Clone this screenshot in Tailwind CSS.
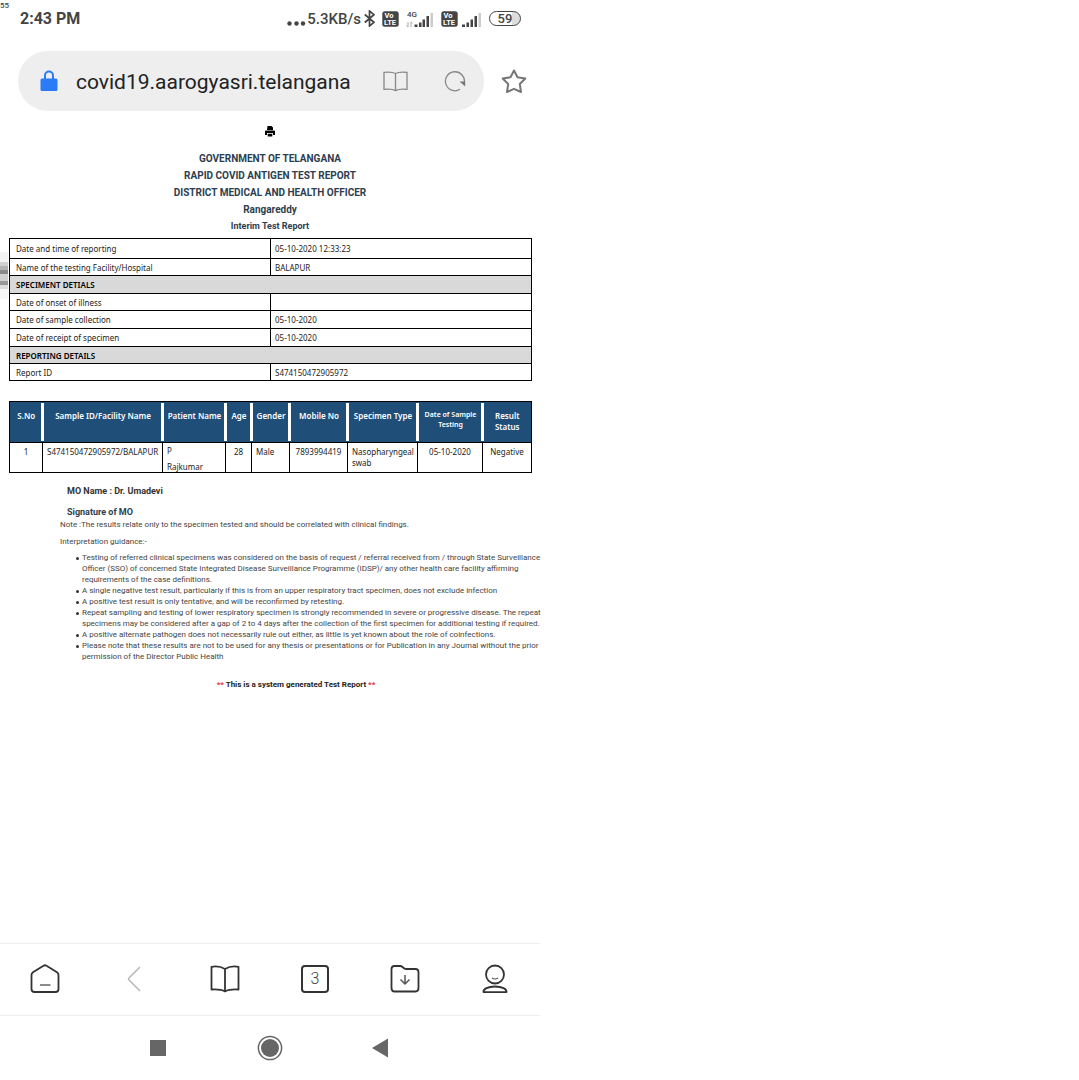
<!DOCTYPE html>
<html lang="en">
<head>
<meta charset="utf-8">
<meta name="viewport" content="width=device-width, initial-scale=1">
<title>Rapid Covid Antigen Test Report</title>
<script src="https://cdn.jsdelivr.net/npm/@tailwindcss/browser@4"></script>
</head>
<body class="bg-white font-['Roboto',sans-serif] text-[#333]">
<div class="relative flex min-h-screen w-1/2 min-w-[540px] flex-col">
  <span class="absolute left-0 top-px text-[8px] leading-[10px] font-medium text-[#444]">55</span>
  <!-- scroll handle on the left edge -->
  <div class="absolute left-0 top-[252px] flex w-2 flex-col" aria-hidden="true">
    <div class="h-[10px] bg-[#f4f4f4]"></div>
    <div class="h-1 bg-[#d0d0d0]"></div>
    <div class="h-1 bg-[#b4b4b4]"></div>
    <div class="h-1 bg-[#8a8a8a]"></div>
    <div class="h-[7px] bg-[#d0d0d0]"></div>
    <div class="h-1 bg-[#999]"></div>
    <div class="h-1 bg-[#dcdcdc]"></div>
    <div class="h-[10px] bg-[#f6f6f6]"></div>
  </div>

  <!-- status bar -->
  <div class="flex h-[37px] items-center justify-between pl-5 pr-[19px] text-[#444]">
    <span class="text-[16px] leading-5 font-bold">2:43 PM</span>
    <div class="flex items-center">
      <svg class="mr-px mt-[9px] h-[5px] w-[19px]" viewBox="0 0 19 5" fill="#444"><circle cx="2.5" cy="2.5" r="2.200"/><circle cx="9.500" cy="2.5" r="2.200"/><circle cx="16" cy="2.5" r="2.200"/></svg>
      <span class="text-[15px] leading-5 font-medium">5.3KB/s</span>
      <svg class="ml-[3px] h-[17px] w-[11px]" viewBox="0 0 11 17" fill="none" stroke="#444" stroke-width="1.700"><path d="M.8 4.500 10 12.300 5.500 16V1L10 4.700.8 12.500"/></svg>
      <svg class="ml-[7px] h-4 w-[17px]" viewBox="0 0 17 16"><rect x=".3" y=".3" width="16.400" height="15.400" rx="2.500" fill="#444"/><text x="2.500" y="7.300" font-size="7.500" font-weight="700" fill="#fff">Vo</text><text x="2" y="14.300" font-size="7.500" font-weight="700" fill="#fff">LTE</text></svg>
      <svg class="ml-[7px] h-[18px] w-[28px]" viewBox="0 0 28 18"><text x="1" y="7" font-size="8" font-weight="500" fill="#444">4G</text><path d="M2 12v5M.5 15.500 2 17M5 17v-5l1.200 1.500" stroke="#aaa" fill="none"/><path d="M8.500 14.500h3V17h-3zM13 12.500h2.500V17H13zM16.500 9.500H19V17h-2.500zM20.500 6H23v11h-2.500z" fill="#444"/><path d="M24.500 3H27v14h-2.500z" fill="#ccc"/></svg>
      <svg class="ml-[7px] h-4 w-[17px]" viewBox="0 0 17 16"><rect x=".3" y=".3" width="16.400" height="15.400" rx="2.500" fill="#444"/><text x="2.500" y="7.300" font-size="7.500" font-weight="700" fill="#fff">Vo</text><text x="2" y="14.300" font-size="7.500" font-weight="700" fill="#fff">LTE</text></svg>
      <svg class="ml-[3px] h-[18px] w-5" viewBox="0 0 20 18"><path d="M1 14.500h3V17H1zM5.500 12.500H8V17H5.500zM9.500 9.500H12V17H9.500zM13.500 6H16v11h-2.500z" fill="#444"/><path d="M17.500 3H20v14h-2.500z" fill="#ccc"/></svg>
      <span class="ml-2 flex h-[15px] w-8 items-center justify-center rounded-full border border-[#444] bg-linear-to-r from-white from-75% to-[#ddd] to-75% text-[13px] leading-[13px] font-medium">59</span>
    </div>
  </div>

  <!-- address bar -->
  <div class="mt-[14px] flex items-center pl-[18px] pr-[13px]">
    <div class="flex h-[60px] flex-1 items-center rounded-full bg-[#eee] pl-[22px] pr-[18px]">
      <svg class="h-[22px] w-[18px] shrink-0" viewBox="0 0 18 22"><path d="M5 9V5.500a4 4 0 0 1 8 0V9" fill="none" stroke="#2a7bf6" stroke-width="2"/><rect x=".5" y="8.500" width="17" height="12.500" rx="1.500" fill="#2a7bf6"/></svg>
      <input aria-label="Address" value="covid19.aarogyasri.telangana" class="ml-[18px] min-w-0 flex-1 bg-transparent pt-0.5 text-[21px] leading-7 text-[#222] outline-none">
      <button aria-label="Reader mode" class="mr-9"><svg class="block h-[22px] w-[25px]" viewBox="0 0 25 22" fill="none" stroke="#888" stroke-width="1.300"><path d="M12.500 3.500C9.500 1.800 6 1.800 1 2.300v17c5-.5 8.500-.5 11.500 1.300 3-1.800 6.500-1.800 11.500-1.300v-17C19 1.800 15.500 1.800 12.500 3.500zv17"/></svg></button>
      <button aria-label="Reload"><svg class="block h-[22px] w-[22px]" viewBox="0 0 22 22"><path d="M16 19.300A9.500 9.500 0 1 1 20.300 13" fill="none" stroke="#888" stroke-width="1.300"/><path d="M15.500 11.500h5.700v5z" fill="#777"/></svg></button>
    </div>
    <button aria-label="Bookmark" class="ml-[17px]"><svg class="block size-[26px]" viewBox="0 0 26 26" fill="none" stroke="#777" stroke-width="2" stroke-linejoin="round"><path d="m13 2.500 3.500 6.800 7.800 1.200-5.500 5.500 1.200 8-7-3.200-7 3.200 1.200-8-5.500-5.500 7.800-1.200z"/></svg></button>
  </div>

  <!-- report -->
  <main class="flex-1">
    <button aria-label="Print" class="mx-auto mt-[15px] block"><svg class="block h-[11px] w-[10px]" viewBox="0 0 10 11"><path d="M2.500 0h4L8 1.500V4H2zM1 4.500h8q1 0 1 1V9H8V7H2v2H0V5.500q0-1 1-1zM2.700 7.800h4.600v2.700H2.700z"/></svg></button>
    <header class="mt-[13px] text-center text-[10px] leading-[17px] font-bold text-[#2c3e50]">
      <h1>GOVERNMENT OF TELANGANA</h1>
      <h2>RAPID COVID ANTIGEN TEST REPORT</h2>
      <h2>DISTRICT MEDICAL AND HEALTH OFFICER</h2>
      <p>Rangareddy</p>
      <p class="text-[9px] leading-4">Interim Test Report</p>
    </header>

    <div class="mt-1 pl-[9px] pr-2 font-['Noto_Sans','Open_Sans',sans-serif] text-[8px] leading-[11px] text-[#222]">
      <table class="w-full table-fixed border-collapse text-left [&_td]:border [&_td]:border-black [&_td]:px-1 [&_th]:border [&_th]:border-black [&_th]:px-[6px]">
        <tbody>
          <tr class="h-5"><th class="font-normal">Date and time of reporting</th><td>05-10-2020 12:33:23</td></tr>
          <tr class="h-[17px]"><th class="font-normal">Name of the testing Facility/Hospital</th><td>BALAPUR</td></tr>
          <tr class="h-[18px] bg-[#d9d9d9] text-black"><th colspan="2" class="font-semibold">SPECIMENT DETIALS</th></tr>
          <tr class="h-[17px]"><th class="font-normal">Date of onset of illness</th><td></td></tr>
          <tr class="h-[18px]"><th class="font-normal">Date of sample collection</th><td>05-10-2020</td></tr>
          <tr class="h-[18px]"><th class="font-normal">Date of receipt of specimen</th><td>05-10-2020</td></tr>
          <tr class="h-[17px] bg-[#d9d9d9] text-black"><th colspan="2" class="font-semibold">REPORTING DETAILS</th></tr>
          <tr class="h-[17px]"><th class="font-normal">Report ID</th><td>S474150472905972</td></tr>
        </tbody>
      </table>

      <table class="mt-5 w-full table-fixed border-collapse text-center [&_td]:border [&_td]:border-black [&_td]:px-1 [&_td]:pt-[3px] [&_td]:align-top">
        <colgroup><col class="w-[33px]"><col class="w-[120px]"><col class="w-[63px]"><col class="w-[26px]"><col class="w-[38px]"><col class="w-[58px]"><col class="w-[70px]"><col class="w-[65px]"><col></colgroup>
        <thead class="border border-black bg-[#1f4e79] text-white [&_div]:h-[38px] [&_div]:border-white [&_div]:pt-[7px] [&_th+th_div]:-ml-0.5 [&_th+th_div]:border-l-[3px] [&_th]:p-0 [&_th]:font-semibold">
          <tr class="h-[41px] whitespace-nowrap">
            <th><div>S.No</div></th><th><div>Sample ID/Facility Name</div></th><th><div>Patient Name</div></th><th><div>Age</div></th><th><div>Gender</div></th><th><div>Mobile No</div></th><th><div>Specimen Type</div></th><th><div class="text-[7px] leading-[10px]">Date of Sample<br>Testing</div></th><th><div>Result<br>Status</div></th>
          </tr>
        </thead>
        <tbody>
          <tr class="h-[30px] whitespace-nowrap">
            <td>1</td><td>S474150472905972/BALAPUR</td><td class="text-left leading-4"><div class="-mt-[3px] h-7">P<br>Rajkumar</div></td><td>28</td><td class="text-left">Male</td><td>7893994419</td><td class="text-left">Nasopharyngeal<br>swab</td><td>05-10-2020</td><td>Negative</td>
          </tr>
        </tbody>
      </table>
    </div>

    <div class="ml-[67px] mt-3 text-[9px] leading-3 font-bold">
      <p>MO Name : Dr. Umadevi</p>
      <p class="mt-[9px] text-[#2c3e50]">Signature of MO</p>
    </div>
    <div class="ml-[60px] mt-px text-[8px] leading-[11px] text-[#444]">
      <p>Note :The results relate only to the specimen tested and should be correlated with clinical findings.</p>
      <p class="mt-[6px]">Interpretation guidance:-</p>
      <ul class="mt-[5px] whitespace-nowrap pl-[22px] [&>li]:relative [&>li]:before:absolute [&>li]:before:-left-[6px] [&>li]:before:top-[5px] [&>li]:before:size-[3px] [&>li]:before:rounded-full [&>li]:before:bg-[#333] [&>li]:before:content-['']">
        <li>Testing of referred clinical specimens was considered on the basis of request / referral received from / through State Surveillance<br>Officer (SSO) of concerned State Integrated Disease Surveillance Programme (IDSP)/ any other health care facility affirming<br>requirements of the case definitions.</li>
        <li>A single negative test result, particularly if this is from an upper respiratory tract specimen, does not exclude infection</li>
        <li>A positive test result is only tentative, and will be reconfirmed by retesting.</li>
        <li>Repeat sampling and testing of lower respiratory specimen is strongly recommended in severe or progressive disease. The repeat<br>specimens may be considered after a gap of 2 to 4 days after the collection of the first specimen for additional testing if required.</li>
        <li>A positive alternate pathogen does not necessarily rule out either, as little is yet known about the role of coinfections.</li>
        <li>Please note that these results are not to be used for any thesis or presentations or for Publication in any Journal without the prior<br>permission of the Director Public Health</li>
      </ul>
    </div>
    <p class="mt-[17px] pl-[52px] text-center text-[8px] leading-[11px] font-bold text-[#222]"><span class="text-[#e0304a]">**</span> This is a system generated Test Report <span class="text-[#e0304a]">**</span></p>
  </main>

  <!-- browser toolbar -->
  <nav class="grid h-[73px] grid-cols-6 place-items-center border-y border-[#eee] pb-0.5">
    <button aria-label="Home"><svg class="block size-[30px]" viewBox="0 0 30 30" fill="none" stroke="#333" stroke-width="1.800" stroke-linejoin="round"><path d="M13.500 1.700q1.500-.9 3 0l10.500 6.500q1.500 1 1.500 2.800V25q0 3-3 3h-21q-3 0-3-3V11q0-1.800 1.500-2.800z"/><path d="M10 21h10.500" stroke="#666" stroke-width="1.500"/></svg></button>
    <button aria-label="Back"><svg class="block size-[30px]" viewBox="0 0 30 30" fill="none" stroke="#bbb" stroke-width="1.700" stroke-linecap="round" stroke-linejoin="round"><path d="M19.500 3.500 9 14q-1 1 0 2l10.500 10.500"/></svg></button>
    <button aria-label="Bookmarks"><svg class="block size-[30px]" viewBox="0 0 30 30" fill="none" stroke="#333" stroke-width="1.800" stroke-linejoin="round"><path d="M15 5C11 2.500 6 2 1.500 2.800v22.700c5-.3 9.500-.3 13.500 1.900 4-2.200 8.500-2.200 13.500-1.900V2.800C24 2 19 2.500 15 5zv22"/></svg></button>
    <button aria-label="Tabs" class="flex size-7 items-center justify-center rounded border-2 border-[#333] text-[16px] leading-5 font-light text-[#444]">3</button>
    <button aria-label="Downloads"><svg class="block size-[30px]" viewBox="0 0 30 30" fill="none" stroke="#333" stroke-width="1.800" stroke-linejoin="round"><path d="M1.500 5q0-3 3-3H10q1.500 0 2.500 1l1.500 1.200q1 .8 2.500.8h9q3 0 3 3V24q0 3.500-3 3.500h-21q-3 0-3-3.500z"/><path d="M15 11v9M10.500 15.500l4.500 4.500 4.500-4.500" stroke="#555" stroke-width="1.500"/></svg></button>
    <button aria-label="Profile"><svg class="block size-[30px]" viewBox="0 0 30 30" fill="none" stroke="#333" stroke-width="1.800" stroke-linejoin="round"><circle cx="15" cy="10.500" r="9"/><path d="M12 14q3 2 6 0" stroke="#555" stroke-width="1.200"/><path d="M3.500 28.200C3 25 8 22.500 15 22.500S27 25 26.500 28.200z"/></svg></button>
  </nav>

  <!-- system navigation -->
  <nav class="flex h-16 items-center justify-center pr-[3px]">
    <button aria-label="Recent apps"><svg class="block h-7 w-[18px]" viewBox="0 0 18 28"><path d="M1 6h16v16H1z" fill="#666"/></svg></button>
    <button aria-label="Home screen" class="ml-[89px]"><svg class="block size-7" viewBox="0 0 28 28"><circle cx="14" cy="14" r="11.600" fill="none" stroke="#666" stroke-width="1.500"/><circle cx="14" cy="14" r="9" fill="#666"/></svg></button>
    <button aria-label="Go back" class="ml-[87px]"><svg class="block h-7 w-[18px]" viewBox="0 0 18 28"><path d="M17 4.500v19L1 14z" fill="#666"/></svg></button>
  </nav>
</div>
</body>
</html>
